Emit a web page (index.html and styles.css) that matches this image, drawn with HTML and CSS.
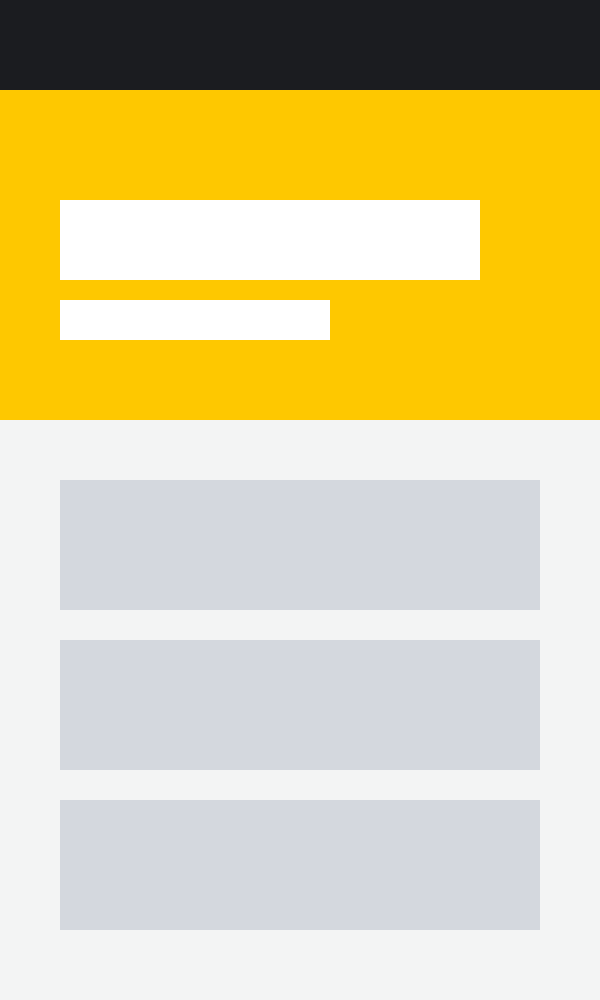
FILE: index.html
```html
<!DOCTYPE html>
<html lang="en">
<head>
    <meta charset="UTF-8">
    <meta name="viewport" content="width=device-width, initial-scale=1.0">
    <title>Loading</title>
    <link rel="stylesheet" href="styles.css">
</head>
<body>

<!-- Top bar -->
<div class="topbar"></div>

<!-- Hero -->
<div class="hero">
    <div class="hero-title"></div>
    <div class="hero-subtitle"></div>
</div>

<!-- Content placeholders -->
<div class="content">
    <div class="card"></div>
    <div class="card"></div>
    <div class="card"></div>
</div>

</body>
</html>
```

FILE: styles.css
```css
/* Base Styles */
* {
    margin: 0;
    padding: 0;
    box-sizing: border-box;
    font-family: "Liberation Sans", Arial, sans-serif;
}

body {
    min-height: 100vh;
    background-color: #f3f4f4;
}

/* Top bar */
.topbar {
    height: 90px;
    background: #1b1c20;
}

/* Hero */
.hero {
    height: 330px;
    background: #fec800;
    padding: 110px 60px 0;
    display: flex;
    flex-direction: column;
    gap: 20px;
}

.hero-title {
    width: 420px;
    height: 80px;
    background: #ffffff;
}

.hero-subtitle {
    width: 270px;
    height: 40px;
    background: #ffffff;
}

/* Content */
.content {
    padding: 60px 60px 70px;
    display: flex;
    flex-direction: column;
    gap: 30px;
}

.card {
    width: 480px;
    height: 130px;
    background: #d4d8de;
}
```
